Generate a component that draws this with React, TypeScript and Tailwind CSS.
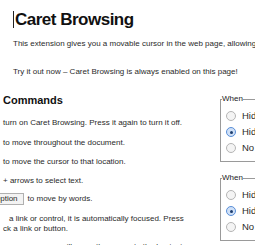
export default function App() {
  const Radio = ({ checked = false }: { checked?: boolean }) => (
    <span
      className={`inline-flex items-center justify-center w-[10px] h-[10px] rounded-full border shrink-0 ${
        checked ? "border-[#5a8fd8] bg-[#cfe0f7]" : "border-[#b5b5b5] bg-[#f4f4f4]"
      }`}
    >
      {checked && <span className="w-[3px] h-[3px] rounded-full bg-[#1d3d6e]" />}
    </span>
  );

  const Group = ({ items, checked }: { items: string[]; checked: number }) => (
    <fieldset className="border border-[#9a9a9a] w-[120px] pl-[5px] pb-[8px] pt-[7px] m-0">
      <legend className="text-[8px] leading-[10px] text-[#222] px-0 ml-[-4px]">When</legend>
      <div className="flex flex-col gap-[6px]">
        {items.map((t, i) => (
          <div key={i} className="flex items-center gap-[6px] h-[10px]">
            <Radio checked={i === checked} />
            <span className="text-[9.5px] leading-[10px]">{t}</span>
          </div>
        ))}
      </div>
    </fieldset>
  );

  return (
    <div className="w-[255px] h-[245px] overflow-hidden bg-white text-[#2a2a2a] font-['Liberation_Sans',sans-serif]">
      <div className="pl-[13px] pt-[10px]">
        <h1 className="flex items-center text-[17px] leading-[19px] font-bold tracking-[-0.5px] text-[#111]">
          <span className="w-[1px] h-[17px] bg-[#222] mr-[1px]" />
          Caret Browsing
        </h1>
        <p className="text-[8px] leading-[10px] mt-[10px] whitespace-nowrap">
          This extension gives you a movable cursor in the web page, allowing you to select text.
        </p>
        <p className="text-[8px] leading-[10px] mt-[18px] whitespace-nowrap">
          Try it out now – Caret Browsing is always enabled on this page!
        </p>
      </div>

      <div className="flex mt-[17px]">
        <div className="w-[220px] shrink-0 pl-[3px] text-[8px] leading-[10px]">
          <h2 className="text-[11px] leading-[13px] font-bold text-[#111]">Commands</h2>
          <p className="mt-[11px] whitespace-nowrap">turn on Caret Browsing. Press it again to turn it off.</p>
          <p className="mt-[10px] whitespace-nowrap">to move throughout the document.</p>
          <p className="mt-[9px] whitespace-nowrap">to move the cursor to that location.</p>
          <p className="mt-[9px] whitespace-nowrap">+ arrows to select text.</p>
          <p className="mt-[7px] whitespace-nowrap flex items-center">
            <span className="inline-block ml-[-15px] border border-[#b0b0b0] bg-[#f3f3f3] px-[5px] h-[12px] leading-[10px] mr-[4px]">
              Option
            </span>
            to move by words.
          </p>
          <p className="mt-[9px] indent-[6px]">
            a link or control, it is automatically focused. Press
            <br />
            ck a link or button.
          </p>
          <p className="mt-[8px] pl-[58px] whitespace-nowrap">will move the cursor to the beginning</p>
        </div>
        <div className="shrink-0 flex flex-col gap-[11px]">
          <Group items={["Hide the caret", "Hide the caret", "No change"]} checked={1} />
          <Group items={["Hide the caret", "Hide the caret", "No change"]} checked={1} />
        </div>
      </div>
    </div>
  );
}
